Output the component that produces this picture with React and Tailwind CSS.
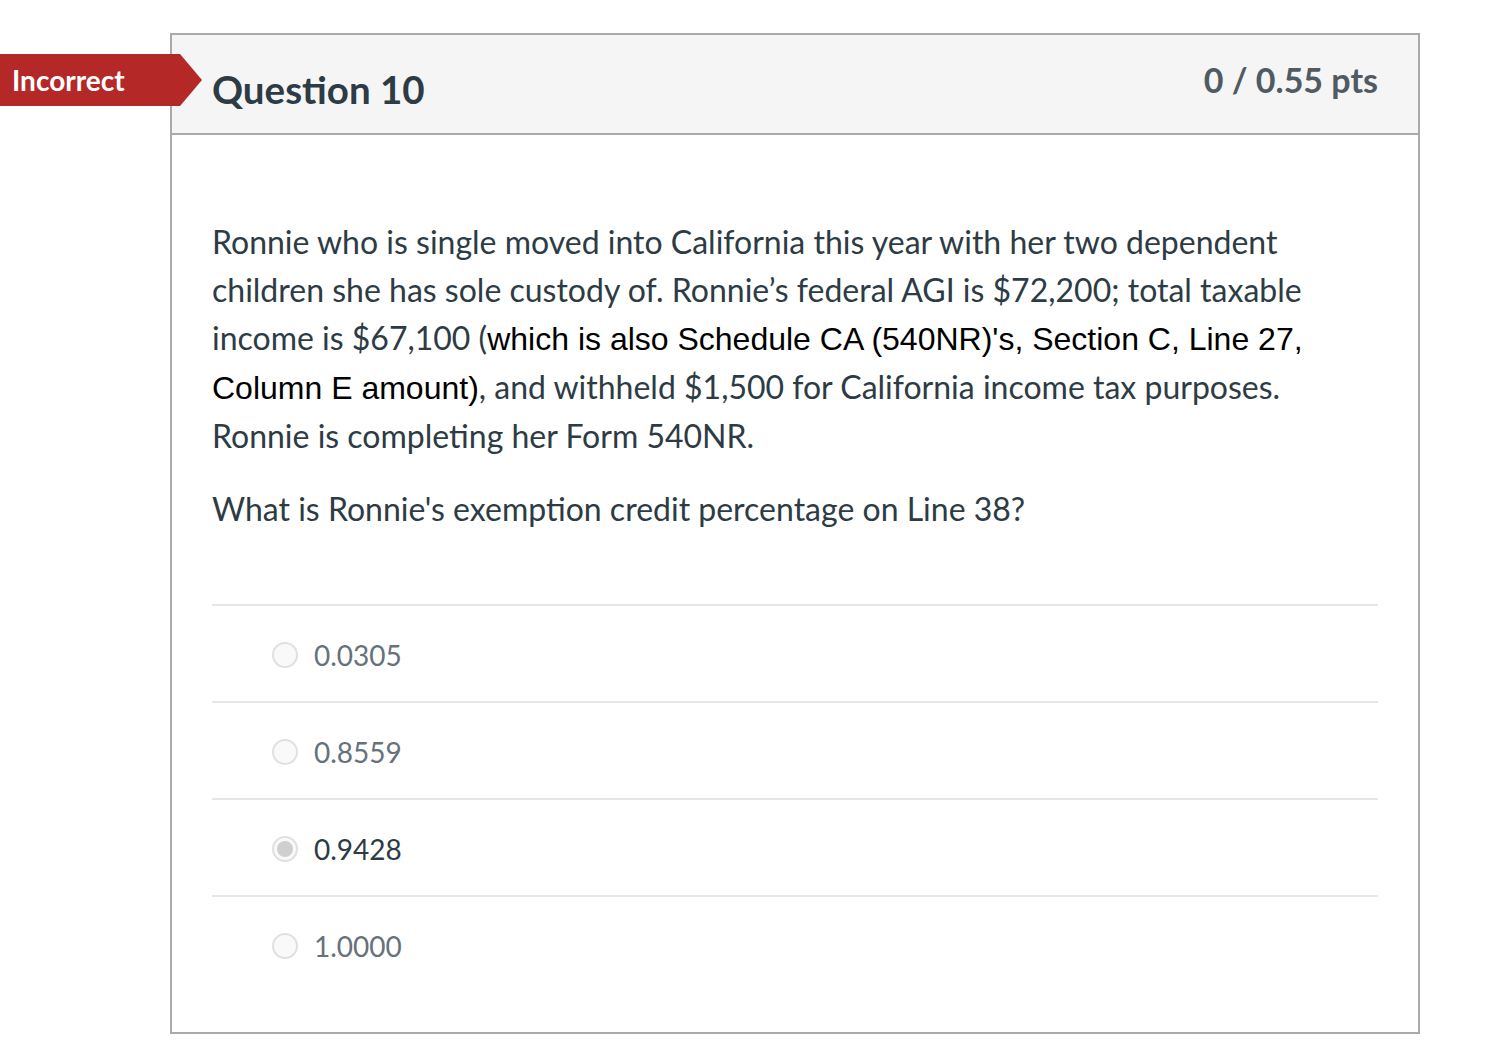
const answers = [
  { label: '0.0305', selected: false },
  { label: '0.8559', selected: false },
  { label: '0.9428', selected: true },
  { label: '1.0000', selected: false },
];

function Radio({ selected }) {
  return (
    <span className="flex h-[26px] w-[26px] shrink-0 items-center justify-center rounded-full border-2 border-[#e0e0e0] bg-[#f9f9f9]">
      {selected && <span className="h-[16px] w-[16px] rounded-full bg-[#cfcfcf]" />}
    </span>
  );
}

export default function App() {
  return (
    <div className="relative min-h-[1064px] bg-white pt-[33px] font-['Lato','Noto_Sans',sans-serif] text-[#2d3b45]">
      <div className="absolute left-0 top-[54px] flex h-[52px] items-center">
        <div className="flex h-full w-[180px] items-center bg-[#b52828] pl-[12px] text-[28px] font-bold text-white">
          Incorrect
        </div>
        <svg width="22" height="52" viewBox="0 0 22 52" className="block">
          <polygon points="0,0 22,26 0,52" fill="#b52828" />
        </svg>
      </div>

      <div className="ml-[170px] w-[1250px] border-2 border-[#aaaaaa]">
        <div className="flex h-[100px] items-start justify-between border-b-2 border-[#aaaaaa] bg-[#f5f5f5] px-[40px]">
          <h2 className="pt-[31px] text-[38.5px] font-bold leading-[46px]">Question 10</h2>
          <div className="pt-[25px] text-[34px] font-bold leading-[40px] text-[#4f5a63]">0 / 0.55 pts</div>
        </div>

        <div className="px-[40px] pb-[40px] pt-[83px]">
          <div className="text-[32px] leading-[48px]">
            <p>
              Ronnie who is single moved into California this year with her two dependent children she has sole
              custody of. Ronnie’s federal AGI is $72,200; total taxable income is $67,100 (
              <span className="font-['Liberation_Sans',Arial,sans-serif] text-[32px] text-black">
                which is also Schedule CA (540NR)'s, Section C, Line 27, Column E amount)
              </span>
              , and withheld $1,500 for California income tax purposes. Ronnie is completing her Form 540NR.
            </p>
            <p className="mt-[25px]">What is Ronnie's exemption credit percentage on Line 38?</p>
          </div>

          <div className="mt-[71px]">
            {answers.map((a) => (
              <div
                key={a.label}
                className="flex h-[97px] items-center gap-[16px] border-t-2 border-[#e6e6e6] pl-[60px] pt-[3px]"
              >
                <Radio selected={a.selected} />
                <span className={`text-[28px] ${a.selected ? 'text-[#2d3b45]' : 'text-[#66717a]'}`}>{a.label}</span>
              </div>
            ))}
          </div>
        </div>
      </div>
    </div>
  );
}
